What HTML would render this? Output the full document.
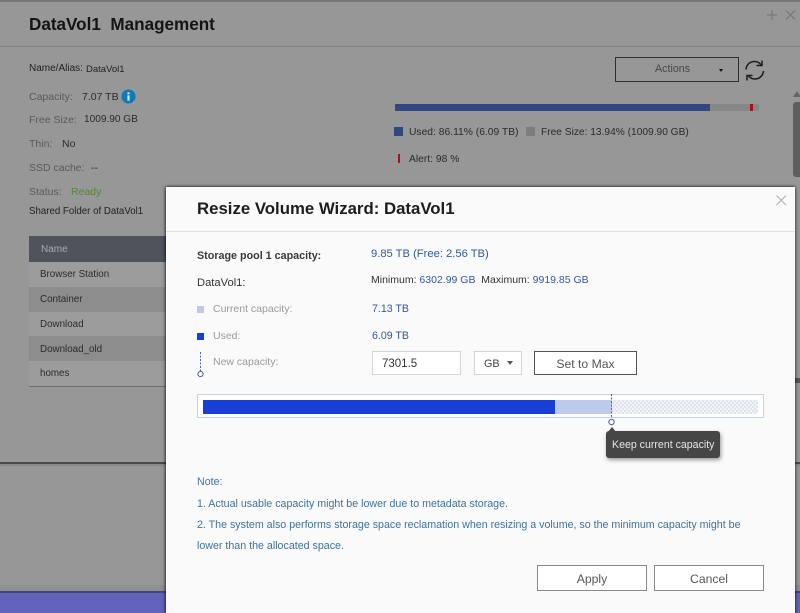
<!DOCTYPE html>
<html>
<head>
<meta charset="utf-8">
<style>
html,body{margin:0;padding:0;background:#979797}
body{width:800px;height:613px;overflow:hidden;position:relative;font-family:"Liberation Sans",sans-serif;font-size:10.5px;color:#333}
.t{position:absolute;white-space:nowrap;line-height:14px;margin-top:1px}
.b{position:absolute;box-sizing:border-box}
.l{color:#5a5a5a}
.d{color:#2b2b2b}
.blue{color:#2f5a9e}
.note{color:#3f729c;font-size:10.67px}
.lab{color:#9a9a9a}
.btn{position:absolute;box-sizing:border-box;background:#fff;text-align:center;color:#555;font-size:12.2px}
</style>
</head>
<body>
<!-- background window -->
<div class="b" style="left:0;top:0;width:800px;height:2px;background:#777"></div>
<div class="b" style="left:0;top:46px;width:800px;height:1px;background:#858585"></div>
<div class="t" style="left:29px;top:14px;font-size:17.1px;font-weight:bold;color:#141414;line-height:20px">DataVol1&nbsp; Management</div>
<svg class="b" style="left:766px;top:9px" width="34" height="14" fill="none" stroke="#777" stroke-width="1.2"><path d="M6 1v10M1 6h10M20 1.5l9 9M29 1.5l-9 9"/></svg>

<div class="t" style="left:29px;top:61px;font-size:10px;color:#222">Name/Alias:</div>
<div class="t" style="left:86px;top:62px;font-size:9.5px;color:#222">DataVol1</div>
<div class="t l" style="left:29px;top:89px">Capacity:</div>
<div class="t d" style="left:82px;top:89px;font-size:10.5px">7.07 TB</div>
<svg class="b" style="left:121px;top:89px" width="15" height="15"><circle cx="7.5" cy="7.5" r="7" fill="#0f7ab5"/><rect x="6.4" y="6.3" width="2.2" height="5.4" fill="#cfe3ee"/><rect x="6.4" y="3.3" width="2.2" height="2" fill="#cfe3ee"/></svg>
<div class="t l" style="left:29px;top:112px">Free Size:</div>
<div class="t d" style="left:84px;top:112px;font-size:10.1px">1009.90 GB</div>
<div class="t l" style="left:29px;top:136px">Thin:</div>
<div class="t d" style="left:62px;top:136px">No</div>
<div class="t l" style="left:29px;top:160px">SSD cache:</div>
<div class="t d" style="left:91px;top:160px">--</div>
<div class="t l" style="left:29px;top:184px">Status:</div>
<div class="t" style="left:71px;top:184px;color:#4f8a2c">Ready</div>
<div class="t" style="left:29px;top:204px;font-size:9.7px;color:#222">Shared Folder of DataVol1</div>

<!-- table -->
<div class="b" style="left:29px;top:236px;width:140px;height:26px;background:#4f535b"></div>
<div class="t" style="left:41px;top:242px;color:#a8aaaf;font-size:10px">Name</div>
<div class="b" style="left:29px;top:262px;width:140px;height:25px;background:#9c9c9c"></div>
<div class="b" style="left:29px;top:287px;width:140px;height:25px;background:#8d8d8d"></div>
<div class="b" style="left:29px;top:312px;width:140px;height:24px;background:#9c9c9c"></div>
<div class="b" style="left:29px;top:336px;width:140px;height:25px;background:#8d8d8d"></div>
<div class="b" style="left:29px;top:361px;width:140px;height:25px;background:#9c9c9c"></div>
<div class="b" style="left:29px;top:386px;width:140px;height:1px;background:#6f6f6f"></div>
<div class="t d" style="left:40px;top:267px;font-size:9.8px">Browser Station</div>
<div class="t d" style="left:40px;top:292px;font-size:9.8px">Container</div>
<div class="t d" style="left:40px;top:317px;font-size:9.8px">Download</div>
<div class="t d" style="left:40px;top:342px;font-size:9.8px">Download_old</div>
<div class="t d" style="left:40px;top:366px;font-size:9.8px">homes</div>

<!-- right top -->
<div class="b" style="left:615px;top:57px;width:124px;height:25px;border:1px solid #2f2f2f"></div>
<div class="t" style="left:655px;top:61px;font-size:10.7px;color:#474747">Actions</div>
<div class="b" style="left:719px;top:69px;width:0;height:0;border:2.5px solid transparent;border-top:3px solid #111"></div>
<svg class="b" style="left:744px;top:59px" width="22" height="23" fill="none" stroke="#1c1c1c" stroke-width="1.5"><path d="M2 10.5C2.500 5 6.500 2.500 10.500 2.500c2.800 0 5 1.200 6.500 3.200M19.500 12c-.5 5-4.500 8-8.500 8-2.800 0-5.200-1.200-6.800-3.300"/><path d="M18 1.500v5h-5.500M3 21.500v-5h5.500"/></svg>

<div class="b" style="left:395px;top:104px;width:364px;height:7px;background:#878787"></div>
<div class="b" style="left:395px;top:104px;width:315px;height:7px;background:#33477f"></div>
<div class="b" style="left:750px;top:104px;width:3px;height:7px;background:#b00f0f"></div>
<div class="b" style="left:394px;top:127px;width:9px;height:9px;background:#33477f"></div>
<div class="t d" style="left:409px;top:125px;font-size:10.3px">Used: 86.11% (6.09 TB)</div>
<div class="b" style="left:526px;top:127px;width:9px;height:9px;background:#7d7d7d"></div>
<div class="t d" style="left:541px;top:125px;font-size:10.2px">Free Size: 13.94% (1009.90 GB)</div>
<div class="b" style="left:398px;top:154px;width:2px;height:9px;background:#b00f0f"></div>
<div class="t d" style="left:409px;top:152px;font-size:10.3px">Alert: 98 %</div>
<div class="b" style="left:793px;top:102px;width:7px;height:75px;background:#5e5e5e;border-radius:3px 0 0 3px"></div>
<div class="b" style="left:793px;top:91px;width:0;height:0;border-left:4px solid transparent;border-right:4px solid transparent;border-bottom:6px solid #666"></div>
<div class="b" style="left:794px;top:378px;width:6px;height:5px;background:#555"></div>

<!-- lower background -->
<div class="b" style="left:0;top:462px;width:800px;height:2px;background:#4a4a4a"></div>
<div class="b" style="left:0;top:464px;width:800px;height:2px;background:#8a8a8a"></div>
<div class="b" style="left:0;top:585px;width:800px;height:6px;background:#8f8f8f"></div>
<div class="b" style="left:0;top:591px;width:800px;height:22px;background:#6163bd"></div>
<div class="b" style="left:0;top:591px;width:800px;height:2px;background:#44457f"></div>

<!-- dialog -->
<div class="b" style="left:166px;top:187px;width:629px;height:426px;background:#fafafa;box-shadow:-1px 0 3px rgba(0,0,0,.55),1px 0 3px rgba(0,0,0,.35),0 -1px 2px rgba(0,0,0,.2)"></div>
<div class="b" style="left:166px;top:231px;width:629px;height:1px;background:#e2e2e2"></div>
<div class="t" style="left:197px;top:198px;font-size:16.8px;font-weight:bold;color:#1d1d1d;line-height:20px">Resize Volume Wizard: DataVol1</div>
<svg class="b" style="left:775px;top:194px" width="13" height="13" fill="none" stroke="#b4b4b4" stroke-width="1.2"><path d="M1.500 1.500l9.500 9.500M11 1.500l-9.500 9.500"/></svg>

<div class="t" style="left:197px;top:248px;font-size:10.75px;font-weight:bold;color:#3a3a3a">Storage pool 1 capacity:</div>
<div class="t blue" style="left:371px;top:246px;font-size:11.2px">9.85 TB (Free: 2.56 TB)</div>
<div class="t" style="left:197px;top:275px;font-size:11.2px;color:#333">DataVol1:</div>
<div class="t" style="left:371px;top:272px;font-size:10.5px;color:#333">Minimum: <span class="blue">6302.99 GB</span>&nbsp; Maximum: <span class="blue">9919.85 GB</span></div>

<div class="b" style="left:197px;top:306px;width:7px;height:7px;background:#bdcaea"></div>
<div class="t lab" style="left:213px;top:301px;font-size:10.5px">Current capacity:</div>
<div class="t blue" style="left:372px;top:301px;font-size:10.6px">7.13 TB</div>
<div class="b" style="left:197px;top:333px;width:7px;height:7px;background:#173fd6"></div>
<div class="t lab" style="left:213px;top:328px;font-size:10.5px">Used:</div>
<div class="t blue" style="left:372px;top:328px;font-size:10.6px">6.09 TB</div>
<svg class="b" style="left:196px;top:351px" width="10" height="28" fill="none" stroke="#4d6294"><path d="M4.500 1v20" stroke-dasharray="2 1.500"/><circle cx="4.500" cy="23" r="2.600" fill="#fafafa"/></svg>
<div class="t lab" style="left:213px;top:354px;font-size:10.5px">New capacity:</div>

<div class="b" style="left:372px;top:351px;width:89px;height:24px;background:#fff;border:1px solid #d4d4d4"></div>
<div class="t" style="left:382px;top:356px;font-size:11.5px;color:#333">7301.5</div>
<div class="b" style="left:474px;top:351px;width:48px;height:24px;background:#fff;border:1px solid #d4d4d4"></div>
<div class="t" style="left:484px;top:356px;font-size:10.8px;color:#444">GB</div>
<div class="b" style="left:507px;top:361px;width:0;height:0;border:3.500px solid transparent;border-top:4px solid #555"></div>
<div class="btn" style="left:534px;top:351px;width:103px;height:24px;border:1px solid #555;line-height:24px">Set to Max</div>

<!-- slider -->
<div class="b" style="left:197px;top:394px;width:567px;height:24px;background:#fff;border:1px solid #c4d0ee"></div>
<div class="b" style="left:612px;top:400px;width:146px;height:14px;background-color:#f2f3f8;background-image:linear-gradient(45deg,#dfe3ee 25%,transparent 25%,transparent 75%,#dfe3ee 75%),linear-gradient(45deg,#dfe3ee 25%,transparent 25%,transparent 75%,#dfe3ee 75%);background-size:4px 4px;background-position:0 0,2px 2px"></div>
<div class="b" style="left:203px;top:400px;width:352px;height:14px;background:#173fd6"></div>
<div class="b" style="left:555px;top:400px;width:57px;height:14px;background:#bdcaea"></div>
<svg class="b" style="left:607px;top:394px" width="10" height="32" fill="none" stroke="#4d6294"><path d="M4.500 0v23" stroke-dasharray="2 1.500"/><circle cx="4.500" cy="28" r="2.700" fill="#fafafa"/></svg>
<div class="b" style="left:606px;top:431px;width:114px;height:27px;background:#464646;border-radius:3px;box-shadow:1px 2px 4px rgba(0,0,0,.4)"></div>
<div class="b" style="left:608px;top:427px;width:0;height:0;border-left:4px solid transparent;border-right:4px solid transparent;border-bottom:5px solid #464646"></div>
<div class="t" style="left:612px;top:437px;font-size:10.6px;color:#e6e6e6">Keep current capacity</div>

<!-- notes -->
<div class="t note" style="left:197px;top:474px">Note:</div>
<div class="t note" style="left:197px;top:496px">1. Actual usable capacity might be lower due to metadata storage.</div>
<div class="t note" style="left:197px;top:517px">2. The system also performs storage space reclamation when resizing a volume, so the minimum capacity might be</div>
<div class="t note" style="left:197px;top:538px">lower than the allocated space.</div>

<div class="btn" style="left:537px;top:565px;width:110px;height:26px;border:1px solid #8a8a8a;line-height:26px">Apply</div>
<div class="btn" style="left:654px;top:565px;width:110px;height:26px;border:1px solid #8a8a8a;line-height:26px">Cancel</div>
</body>
</html>
